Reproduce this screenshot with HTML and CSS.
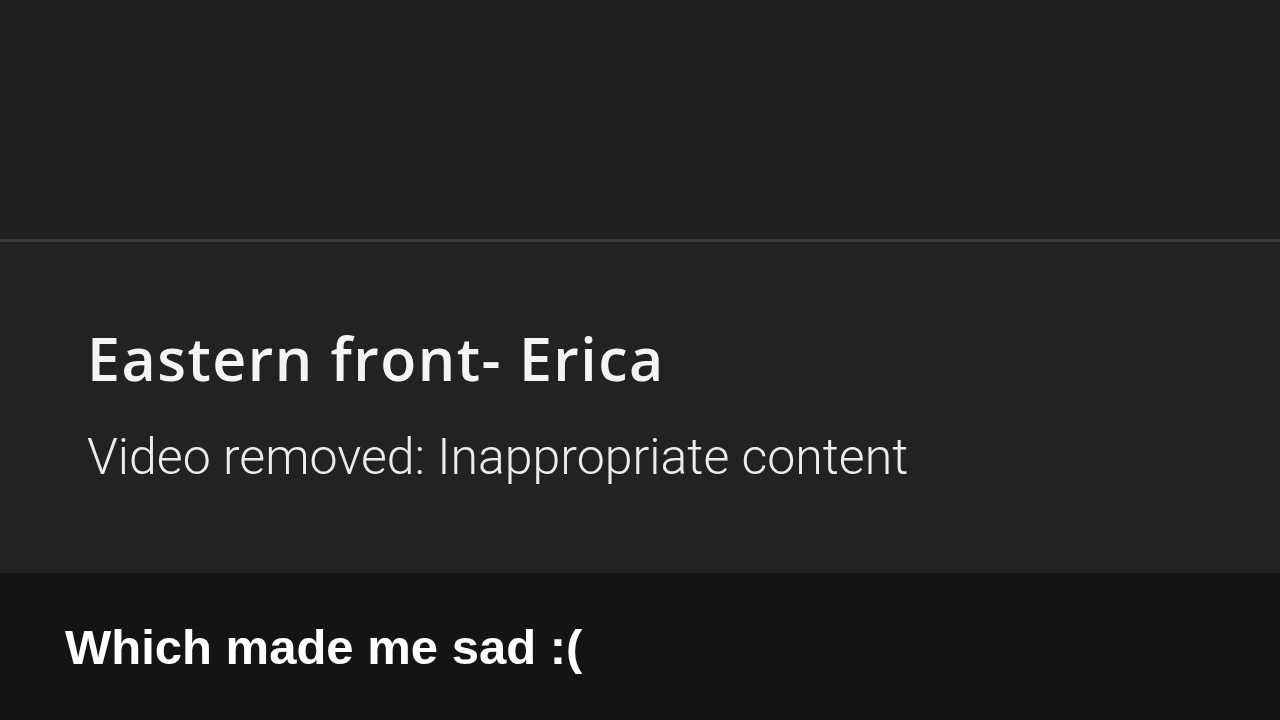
FILE: index.html
```html
<!DOCTYPE html>
<html>
<head>
<meta charset="utf-8">
<link rel="stylesheet" href="styles.css">
</head>
<body>
<div class="screen">
  <div class="top"></div>
  <div class="divider"></div>
  <div class="info">
    <h1 class="title">Eastern front- Erica</h1>
    <p class="sub">Video removed: Inappropriate content</p>
  </div>
  <div class="caption">
    <span class="cap-text">Which made me sad :(</span>
  </div>
</div>
</body>
</html>
```
FILE: styles.css
```css
html, body {
  margin: 0;
  padding: 0;
  background: #212121;
}
.screen {
  width: 1280px;
  height: 720px;
  display: flex;
  flex-direction: column;
  overflow: hidden;
  background: #212121;
}
.top {
  height: 239px;
  background: #212121;
}
.divider {
  height: 3px;
  background: #3b3b3b;
}
.info {
  height: 331px;
  background: #222222;
  padding-left: 87px;
  box-sizing: border-box;
  padding-top: 76px;
}
.title {
  margin: 0;
  font-family: "Open Sans", "Noto Sans", sans-serif;
  font-weight: 600;
  font-size: 59px;
  line-height: 80px;
  color: #f4f4f4;
  letter-spacing: 1.5px;
}
.sub {
  margin: 29px 0 0 0;
  font-family: Roboto, sans-serif;
  font-weight: 300;
  font-size: 50px;
  line-height: 60px;
  color: #ececec;
}
.caption {
  flex: 1;
  background: #141414;
  padding-left: 65px;
  padding-top: 40px;
  box-sizing: border-box;
}
.cap-text {
  font-family: "Liberation Sans", Arial, sans-serif;
  font-weight: 700;
  font-size: 49px;
  line-height: 68px;
  color: #ffffff;
}
```
